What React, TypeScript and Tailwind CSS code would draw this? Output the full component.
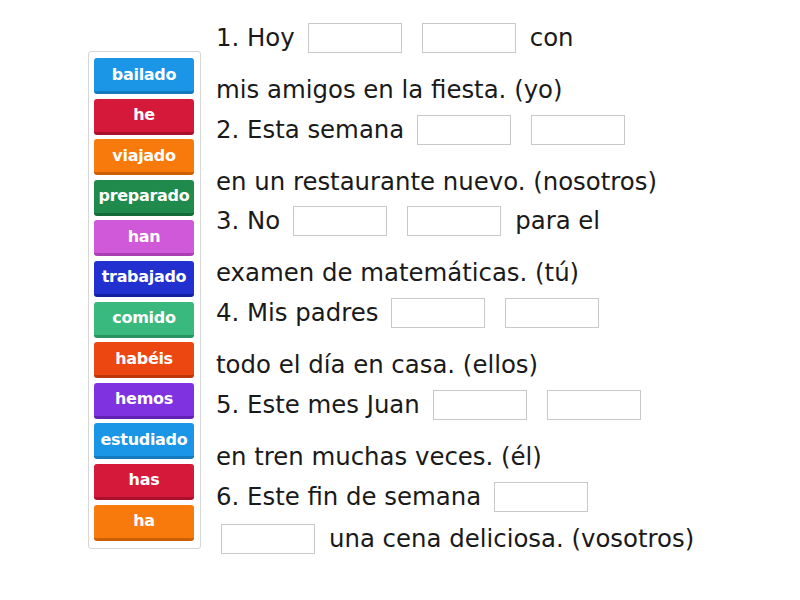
import React from 'react';

const TILES = [
    { label: 'bailado', bg: 'bg-[#1b95e6]', edge: 'border-[#1479bd]' },
    { label: 'he', bg: 'bg-[#d4193b]', edge: 'border-[#a8102c]' },
    { label: 'viajado', bg: 'bg-[#f87a0c]', edge: 'border-[#cc5f04]' },
    { label: 'preparado', bg: 'bg-[#1f8a4c]', edge: 'border-[#146a38]' },
    { label: 'han', bg: 'bg-[#cf59d9]', edge: 'border-[#a93fb3]' },
    { label: 'trabajado', bg: 'bg-[#2230cf]', edge: 'border-[#1520a0]' },
    { label: 'comido', bg: 'bg-[#3ab97e]', edge: 'border-[#2a9362]' },
    { label: 'habéis', bg: 'bg-[#ec4710]', edge: 'border-[#bd350a]' },
    { label: 'hemos', bg: 'bg-[#7f32e0]', edge: 'border-[#6122b3]' },
    { label: 'estudiado', bg: 'bg-[#1b95e6]', edge: 'border-[#1479bd]' },
    { label: 'has', bg: 'bg-[#d4193b]', edge: 'border-[#a8102c]' },
    { label: 'ha', bg: 'bg-[#f87a0c]', edge: 'border-[#cc5f04]' },
];

const Blank = ({ className = '' }: { className?: string }) => (
    <div className={`shrink-0 w-[94px] h-[30px] border border-[#c9c9c9] bg-white ${className}`} />
);

export default function App() {
    return (
        <div
            className="w-[800px] h-[600px] bg-white relative flex"
            style={{ fontFamily: '"DejaVu Sans", Verdana, sans-serif' }}
        >
            {/* word bank */}
            <div className="ml-[88px] mt-[51px] w-[113px] h-[498px] border border-[#d6d6d6] rounded-[3px] px-[5px] pt-[6px] flex flex-col gap-[4.6px]">
                {TILES.map((t) => (
                    <div
                        key={t.label}
                        className={`h-[36px] w-[100px] rounded-[3px] ${t.bg} border-b-[3px] ${t.edge} flex items-center justify-center text-white text-[16px] font-bold tracking-[-0.3px]`}
                    >
                        {t.label}
                    </div>
                ))}
            </div>

            {/* sentences */}
            <div className="ml-[15px] mt-[18px] flex flex-col text-[24.4px] text-[#1a1a1a] whitespace-nowrap">
                <div className="h-[92px]">
                    <div className="h-10 flex items-center">
                        <span>1. Hoy</span>
                        <Blank className="ml-[13px]" />
                        <Blank className="ml-[20px]" />
                        <span className="ml-[14px]">con</span>
                    </div>
                    <div className="mt-3 h-10 flex items-center">mis amigos en la fiesta. (yo)</div>
                </div>
                <div className="h-[91px]">
                    <div className="h-10 flex items-center">
                        <span>2. Esta semana</span>
                        <Blank className="ml-[13px]" />
                        <Blank className="ml-[20px]" />
                    </div>
                    <div className="mt-3 h-10 flex items-center">en un restaurante nuevo. (nosotros)</div>
                </div>
                <div className="h-[92px]">
                    <div className="h-10 flex items-center">
                        <span>3. No</span>
                        <Blank className="ml-[13px]" />
                        <Blank className="ml-[20px]" />
                        <span className="ml-[14px]">para el</span>
                    </div>
                    <div className="mt-3 h-10 flex items-center">examen de matemáticas. (tú)</div>
                </div>
                <div className="h-[92px]">
                    <div className="h-10 flex items-center">
                        <span>4. Mis padres</span>
                        <Blank className="ml-[13px]" />
                        <Blank className="ml-[20px]" />
                    </div>
                    <div className="mt-3 h-10 flex items-center">todo el día en casa. (ellos)</div>
                </div>
                <div className="h-[92px]">
                    <div className="h-10 flex items-center">
                        <span>5. Este mes Juan</span>
                        <Blank className="ml-[13px]" />
                        <Blank className="ml-[20px]" />
                    </div>
                    <div className="mt-3 h-10 flex items-center">en tren muchas veces. (él)</div>
                </div>
                <div>
                    <div className="h-10 flex items-center">
                        <span>6. Este fin de semana</span>
                        <Blank className="ml-[13px]" />
                    </div>
                    <div className="mt-[2px] h-10 flex items-center">
                        <Blank className="ml-[5px]" />
                        <span className="ml-[14px]">una cena deliciosa. (vosotros)</span>
                    </div>
                </div>
            </div>
        </div>
    );
}
